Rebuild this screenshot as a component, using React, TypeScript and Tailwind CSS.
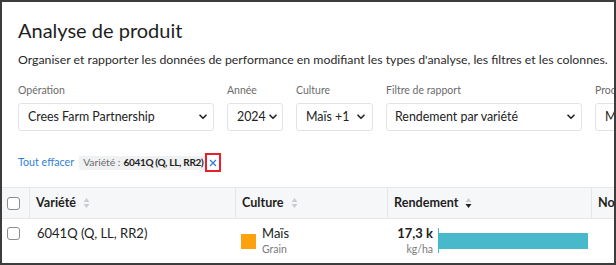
import React from "react";

const Chevron = () => (
  <svg width="8" height="6" viewBox="0 0 8 6" className="shrink-0">
    <path d="M1 1.2 L4 4.3 L7 1.2" fill="none" stroke="#222" strokeWidth="1.6" strokeLinecap="round" strokeLinejoin="round" />
  </svg>
);

const Sort = ({ active }: { active?: boolean }) => (
  <svg width="7" height="12" viewBox="0 0 7 12" className="ml-[7px] shrink-0">
    <path d="M3.5 1 L6.5 5 L0.5 5 Z" fill="#c9cdd2" />
    <path d="M3.5 11 L6.5 7 L0.5 7 Z" fill={active ? "#222" : "#c9cdd2"} />
  </svg>
);

const Field = ({ label, value, w, pad }: { label: string; value: string; w: string; pad: string }) => (
  <div className={`flex flex-col shrink-0 ${w}`}>
    <div className="text-[10.5px] leading-[16px] text-[#6b6b6b] h-[16px] whitespace-nowrap">{label}</div>
    <div className={`mt-[5px] h-[28px] border border-[#e1e3e6] rounded-[3px] flex items-center justify-between ${pad} text-[12.4px] text-[#222]`}>
      <span className="whitespace-nowrap">{value}</span>
      <Chevron />
    </div>
  </div>
);

const Box = () => (
  <div className="w-[13px] h-[13px] border border-[#8d8d8d] rounded-[3px] bg-white shrink-0" />
);

export default function App() {
  return (
    <div
      className="w-[616px] h-[265px] border-2 border-[#3c3c3c] bg-white overflow-hidden flex flex-col"
      style={{ fontFamily: "Lato, 'Noto Sans', sans-serif" }}
    >
      <div className="pl-[16px] pt-[14px]">
        <h1 className="text-[20px] leading-[28px] text-[#1e1e1e] font-normal whitespace-nowrap">Analyse de produit</h1>
        <p className="mt-[7px] text-[12.3px] leading-[18px] text-[#2a2a2a] whitespace-nowrap">
          Organiser et rapporter les données de performance en modifiant les types d'analyse, les filtres et les colonnes.
        </p>
        <div className="mt-[13px] flex gap-[13px] overflow-hidden">
          <Field label="Opération" value="Crees Farm Partnership" w="w-[196px]" pad="pl-[9px] pr-[6px]" />
          <Field label="Année" value="2024" w="w-[56px]" pad="pl-[9px] pr-[5px]" />
          <Field label="Culture" value="Maïs  +1" w="w-[77px]" pad="pl-[9px] pr-[7px]" />
          <Field label="Filtre de rapport" value="Rendement par variété" w="w-[196px]" pad="pl-[8px] pr-[6px]" />
          <Field label="Produit" value="Maïs" w="w-[196px]" pad="pl-[9px] pr-[6px]" />
        </div>
        <div className="mt-[22px] flex items-center h-[19px]">
          <span className="text-[10.7px] text-[#2f7fd6] whitespace-nowrap">Tout effacer</span>
          <div className="ml-[5px] flex items-center h-[14px] bg-[#f0f1f2] rounded-[2px] pl-[4px] whitespace-nowrap">
            <span className="text-[10.3px] text-[#6b6b6b]">Variété :</span>
            <span className="ml-[3px] text-[10px] tracking-[-0.3px] font-bold text-[#222]">6041Q (Q, LL, RR2)</span>
            <div className="ml-[2px] w-[16px] h-[19px] border-2 border-[#e8202a] flex items-center justify-center bg-white">
              <svg width="8" height="8" viewBox="0 0 8 8">
                <path d="M1 1 L7 7 M7 1 L1 7" stroke="#2f7fd6" strokeWidth="1.3" />
              </svg>
            </div>
          </div>
        </div>
      </div>

      <div className="mt-[15px] border-t border-[#e4e6e8]">
        <div className="flex h-[31px] bg-[#f6f7f8] border-b border-[#e4e6e8] text-[12.6px] font-bold text-[#1e1e1e]">
          <div className="w-[28px] shrink-0 flex items-center pl-[5px] border-r border-[#e4e6e8]"><Box /></div>
          <div className="w-[206px] shrink-0 flex items-center pl-[6px] border-r border-[#e4e6e8]">Variété<Sort /></div>
          <div className="w-[152px] shrink-0 flex items-center pl-[6px] border-r border-[#e4e6e8]">Culture<Sort /></div>
          <div className="w-[204px] shrink-0 flex items-center pl-[6px] border-r border-[#e4e6e8]">Rendement<Sort active /></div>
          <div className="flex-1 min-w-0 overflow-hidden flex items-center pl-[6px] whitespace-nowrap">Nom</div>
        </div>
        <div className="flex pt-[5px] text-[13px] text-[#222]">
          <div className="w-[28px] shrink-0 pl-[5px] pt-[3px]"><Box /></div>
          <div className="w-[206px] shrink-0 pl-[7px] leading-[18px]">6041Q (Q, LL, RR2)</div>
          <div className="w-[152px] shrink-0 pl-[5px] flex items-start">
            <div className="mt-[10px] w-[15px] h-[15px] bg-[#fba20c]" />
            <div className="ml-[6px] flex flex-col">
              <span className="leading-[18px]">Maïs</span>
              <span className="text-[10.5px] leading-[15px] text-[#7a7a7a]">Grain</span>
            </div>
          </div>
          <div className="w-[204px] shrink-0 flex items-start pl-[9px]">
            <div className="flex flex-col items-end w-[36px]">
              <span className="font-bold leading-[18px] whitespace-nowrap">17,3 k</span>
              <span className="text-[10.5px] leading-[15px] text-[#7a7a7a]">kg/ha</span>
            </div>
            <div className="ml-[5px] mt-[4px] h-[25px] border-l border-[#45b8c9] flex items-center">
              <div className="w-[149px] h-[16px] bg-[#47b9ca]" />
            </div>
          </div>
        </div>
      </div>
    </div>
  );
}
